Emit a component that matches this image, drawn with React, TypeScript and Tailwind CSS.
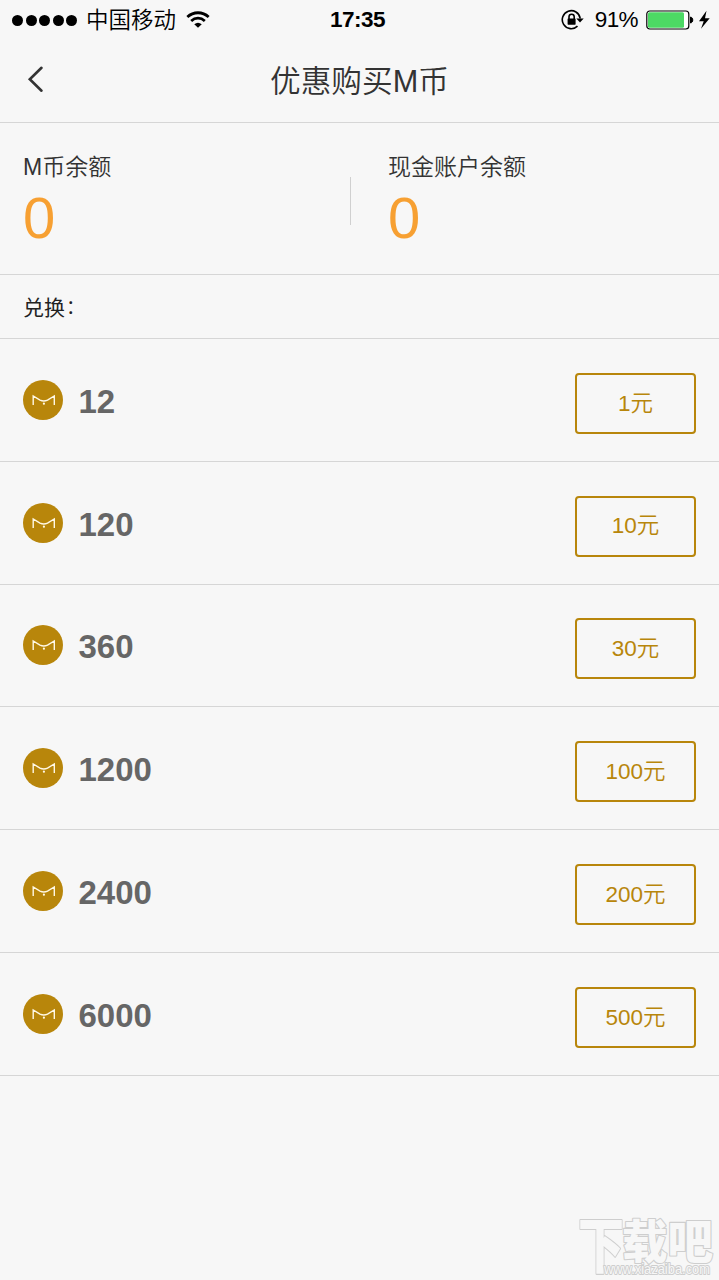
const offers = [
  { coins: '12', price: '1元' },
  { coins: '120', price: '10元' },
  { coins: '360', price: '30元' },
  { coins: '1200', price: '100元' },
  { coins: '2400', price: '200元' },
  { coins: '6000', price: '500元' },
];

function StatusBar() {
  return (
    <div className="flex h-10 items-center justify-between pl-3 pr-2 text-black">
      <div className="flex w-[240px] items-center">
        <div className="flex gap-[2.5px]">
          {[0, 1, 2, 3, 4].map((i) => (
            <span key={i} className="size-[11px] rounded-full bg-black" />
          ))}
        </div>
        <span className="mt-[2px] ml-[9px] text-[22.5px] leading-[38px] font-[350]">中国移动</span>
        <svg className="ml-[10px]" width="24" height="18" viewBox="0 0 25 18" fill="none" stroke="#000" strokeWidth="2.9">
          <path d="M1.4 5.8C7.8 0 17.2 0 23.6 5.8" />
          <path d="M5.4 10C9.6 6.2 15.4 6.2 19.6 10" />
          <path d="M12.5 17.2 8.6 13.4Q12.5 10.2 16.4 13.4Z" fill="#000" stroke="none" />
        </svg>
      </div>
      <span className="-ml-[8px] text-[22.5px] leading-10 font-bold tracking-[-0.5px]">17:35</span>
      <div className="flex w-[240px] items-center justify-end">
        <svg width="24" height="22" viewBox="0 0 24 22" fill="none" stroke="#000" strokeWidth="1.6">
          <path d="M19.2 9.500A9 9 0 1 0 16.500 17.200" />
          <path d="M15.3 9.500H22.700L19 13.600Z" fill="#000" stroke="none" />
          <rect x="6.6" y="9.5" width="8" height="6.2" rx="0.6" fill="#000" stroke="none" />
          <path d="M8 10V7.8a2.6 2.6 0 0 1 5.2 0V10" />
        </svg>
        <span className="ml-[10px] text-[22.5px] leading-10 tracking-[-0.6px]">91%</span>
        <svg className="ml-[8px]" width="65" height="20" viewBox="0 0 65 20">
          <rect x="0.8" y="1" width="42" height="18" rx="3" fill="#fff" stroke="#000" strokeWidth="1.2" />
          <rect x="2" y="2.2" width="36" height="15.6" rx="1.5" fill="#4cd964" />
          <path d="M44.5 7c3 .5 3 5.500 0 6Z" fill="#000" stroke="#000" />
          <path d="M60.500 .8 53 11.200h4.700L55 18.800 63.700 8.200h-4.700Z" fill="#000" />
        </svg>
      </div>
    </div>
  );
}

function CoinIcon() {
  return (
    <svg width="40" height="40" viewBox="0 0 40 40" fill="none">
      <circle cx="20" cy="20" r="20" fill="#b8860b" />
      <path d="M10.200 25V16L17 20.100Q20.800 21.900 24.500 20.100L31.300 16V25" stroke="#fff8e6" strokeWidth="1.400" />
      <circle cx="20.900" cy="23.700" r="1.100" fill="#fff8e6" />
    </svg>
  );
}

function Balance({ label }: { label: string }) {
  return (
    <div>
      <div className="h-[34px] text-[23px] leading-[34px] font-[350] text-[#333]">{label}</div>
      <div className="mt-px text-[58px] leading-[66px] text-[#f7a032]">0</div>
    </div>
  );
}

function Watermark() {
  return (
    <svg className="absolute right-[5px] bottom-0" width="138" height="66" viewBox="0 0 138 66">
      <g fill="#f7f7f7" stroke="#cecece" paintOrder="stroke" strokeLinejoin="round" className="font-['Noto_Sans_CJK_SC',sans-serif]">
        <text x="2" y="54" fontSize="61" strokeWidth="2.200" fontWeight="900" textLength="46" lengthAdjust="spacingAndGlyphs">下</text>
        <text x="46" y="44" fontSize="46" strokeWidth="2.200" fontWeight="900" textLength="91" lengthAdjust="spacingAndGlyphs">载吧</text>
        <text x="28" y="60" fontSize="14" strokeWidth="2" fontWeight="400" textLength="106" lengthAdjust="spacingAndGlyphs" className="font-['Liberation_Sans',sans-serif]">www.xiazaiba.com</text>
      </g>
    </svg>
  );
}

export default function App() {
  return (
    <div className="relative flex h-[1280px] w-[719px] flex-col overflow-hidden bg-[#f7f7f7] font-['Liberation_Sans','Noto_Sans_CJK_SC',sans-serif]">
      <StatusBar />
      <header className="grid h-[83px] grid-cols-[80px_1fr_80px] items-center border-b border-[#d6d6d6]">
        <svg className="mb-[5px] ml-[27px]" width="18" height="28" viewBox="0 0 18 28" fill="none" stroke="#333" strokeWidth="2.600" strokeLinecap="round">
          <path d="M14.500 2.800 2.800 14.200 14.500 25.700" />
        </svg>
        <h1 className="mt-px text-center text-[30.700px] leading-[40px] font-[350] text-[#333]">优惠购买M币</h1>
      </header>
      <section className="flex h-[152px] border-b border-[#d6d6d6] pt-[27px]">
        <div className="w-[350px] pl-[23px]">
          <Balance label="M币余额" />
        </div>
        <div className="mt-[27px] h-[48px] w-px bg-[#d0d0d0]" />
        <div className="pl-[37px]">
          <Balance label="现金账户余额" />
        </div>
      </section>
      <div className="flex h-[64px] border-b border-[#d6d6d6] pl-[23px] text-[21px] leading-[65px] text-[#222]">
        兑换<span className="ml-px text-[19px] leading-[66px] font-[350]">：</span>
      </div>
      <ul>
        {offers.map((offer) => (
          <li key={offer.coins} className="flex h-[122.800px] items-center border-b border-[#d6d6d6] px-[23px]">
            <CoinIcon />
            <span className="mt-[4px] ml-[15.500px] text-[33px] leading-10 font-bold text-[#666]">{offer.coins}</span>
            <button className="mt-[7px] ml-auto h-[61px] w-[121px] rounded-[4px] border-2 border-[#b8860b] text-[22.500px] font-[350] text-[#b8860b]">
              {offer.price}
            </button>
          </li>
        ))}
      </ul>
      <Watermark />
    </div>
  );
}
